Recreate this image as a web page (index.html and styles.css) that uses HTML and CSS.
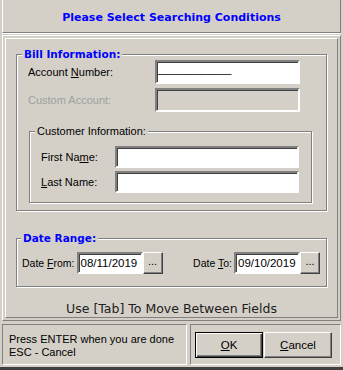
FILE: index.html
```html
<!DOCTYPE html>
<html lang="en">
<head>
    <meta charset="UTF-8">
    <title>Search Bills</title>
    <link rel="stylesheet" href="styles.css">
</head>
<body>
<div class="win">
    <div class="header">
        <h1>Please Select Searching Conditions</h1>
    </div>
    <div class="main">
        <div class="inner">
            <fieldset class="group bill">
                <legend class="title">Bill Information:</legend>
                <div class="row">
                    <label class="lbl">Account <u>N</u>umber:</label>
                    <div class="field mask">____________</div>
                </div>
                <div class="row">
                    <label class="lbl off">Custom Account:</label>
                    <div class="field disabled"></div>
                </div>
                <fieldset class="group cust">
                    <legend class="plain">Customer Information:</legend>
                    <div class="row small">
                        <label class="lbl">First Na<u>m</u>e:</label>
                        <div class="field"></div>
                    </div>
                    <div class="row small">
                        <label class="lbl"><u>L</u>ast Name:</label>
                        <div class="field"></div>
                    </div>
                </fieldset>
            </fieldset>

            <fieldset class="group dates">
                <legend class="title">Date Range:</legend>
                <div class="date-row">
                    <div class="date">
                        <label>Date <u>F</u>rom:</label>
                        <div class="field date-box">08/11/2019</div>
                        <span class="pick">...</span>
                    </div>
                    <div class="date">
                        <label>Date <u>T</u>o:</label>
                        <div class="field date-box">09/10/2019</div>
                        <span class="pick">...</span>
                    </div>
                </div>
            </fieldset>

            <p class="hint">Use [Tab] To Move Between Fields</p>
        </div>
    </div>
    <div class="footer">
        <div class="status">
            <p>Press ENTER when you are done</p>
            <p>ESC - Cancel</p>
        </div>
        <div class="actions">
            <span class="btn default"><u>O</u>K</span>
            <span class="btn"><u>C</u>ancel</span>
        </div>
    </div>
</div>
</body>
</html>
```

FILE: styles.css
```css
*{
    margin: 0;
    padding: 0;
    box-sizing: border-box;
}
body{
    background: #d4d0c8;
    font-family: "Liberation Sans", Arial, sans-serif;
    font-size: 11px;
    color: #000;
}
.win{
    width: 343px;
    height: 370px;
    padding: 0 2px;
    border-bottom: 3px solid #404040;
    display: flex;
    flex-direction: column;
}
.header{
    height: 33px;
    flex-shrink: 0;
    border-left: 1px solid #fff;
    border-right: 1px solid #808080;
    border-bottom: 1px solid #808080;
    box-shadow: 0 1px 0 #fff;
    display: flex;
    align-items: center;
    justify-content: center;
}
.header h1{
    font-family: "DejaVu Sans", sans-serif;
    font-size: 11px;
    font-weight: bold;
    color: #0000ff;
    padding-top: 2px;
}
.main{
    margin-top: 2px;
    height: 286px;
    flex-shrink: 0;
    border: 1px solid;
    border-color: #fff #808080 #808080 #fff;
    padding: 2px;
}
.inner{
    height: 100%;
    border: 1px solid;
    border-color: #fff #808080 #808080 #fff;
    padding: 9px 10px 0 10px;
}
.group{
    border: 1px solid #808080;
    box-shadow: inset 1px 1px 0 #fff, 1px 1px 0 #fff;
}
.group legend{
    padding: 0 2px;
    line-height: 12px;
    background: #d4d0c8;
}
.title{
    font-family: "DejaVu Sans", sans-serif;
    font-weight: bold;
    font-size: 10.5px;
    color: #0000ff;
}
.bill{
    padding: 0 0 7px 11px;
}
.bill > legend{
    margin-left: -6px;
}
.row{
    display: flex;
    align-items: center;
    height: 24px;
    margin-bottom: 4px;
}
.lbl{
    width: 127px;
}
.off{
    color: #a0a0a0;
}
.field{
    width: 145px;
    height: 24px;
    background: #fff;
    border: 2px solid;
    border-color: #808080 #fff #fff #808080;
    box-shadow: inset 1px 1px 0 #404040;
    padding: 0 1px;
    line-height: 17px;
    white-space: nowrap;
    overflow: hidden;
}
.mask{
    line-height: 14px;
}
.disabled{
    background: #d4d0c8;
}
.cust{
    margin: 13px 14px 0 1px;
    padding: 9px 0 10px 11px;
}
.cust > legend{
    margin-left: -6px;
}
.row.small{
    height: 21px;
}
.row.small:last-child{
    margin-bottom: 0;
}
.row.small .lbl{
    width: 74px;
}
.row.small .field{
    width: 184px;
    height: 22px;
}
.dates{
    margin-top: 21px;
    padding: 8px 6px 12px 5px;
}
.dates > legend{
    margin-left: -1px;
}
.date-row{
    display: flex;
    justify-content: space-between;
}
.date{
    display: flex;
    align-items: center;
}
.date label{
    font-size: 10.5px;
    margin-right: 2px;
}
.date-box{
    width: 66px;
    height: 22px;
    line-height: 18px;
    padding-left: 2px;
    font-size: 11.5px;
}
.pick{
    width: 20px;
    height: 22px;
    border: 1px solid;
    border-color: #fff #404040 #404040 #fff;
    box-shadow: inset -1px -1px 0 #808080;
    text-align: center;
    line-height: 17px;
}
.hint{
    font-family: "DejaVu Sans", sans-serif;
    font-size: 12.5px;
    text-align: center;
    margin-top: 14px;
    color: #202020;
}
.footer{
    flex: 1;
    display: flex;
    padding: 3px 0 2px 0;
    gap: 3px;
}
.status{
    width: 185px;
    border: 1px solid;
    border-color: #808080 #fff #fff #808080;
    padding: 8px 6px 0 6px;
    line-height: 13px;
    white-space: nowrap;
}
.actions{
    flex: 1;
    border: 1px solid;
    border-color: #808080 #fff #fff #808080;
    display: flex;
    align-items: center;
    padding-left: 4px;
}
.btn{
    width: 68px;
    height: 26px;
    border: 1px solid;
    border-color: #fff #404040 #404040 #fff;
    box-shadow: inset -1px -1px 0 #808080;
    display: flex;
    align-items: center;
    justify-content: center;
    margin-right: 1px;
    font-size: 11.5px;
}
.btn.default{
    border: 1px solid #000;
    box-shadow: inset 1px 1px 0 #fff, inset -1px -1px 0 #404040, inset -2px -2px 0 #808080;
}
```
